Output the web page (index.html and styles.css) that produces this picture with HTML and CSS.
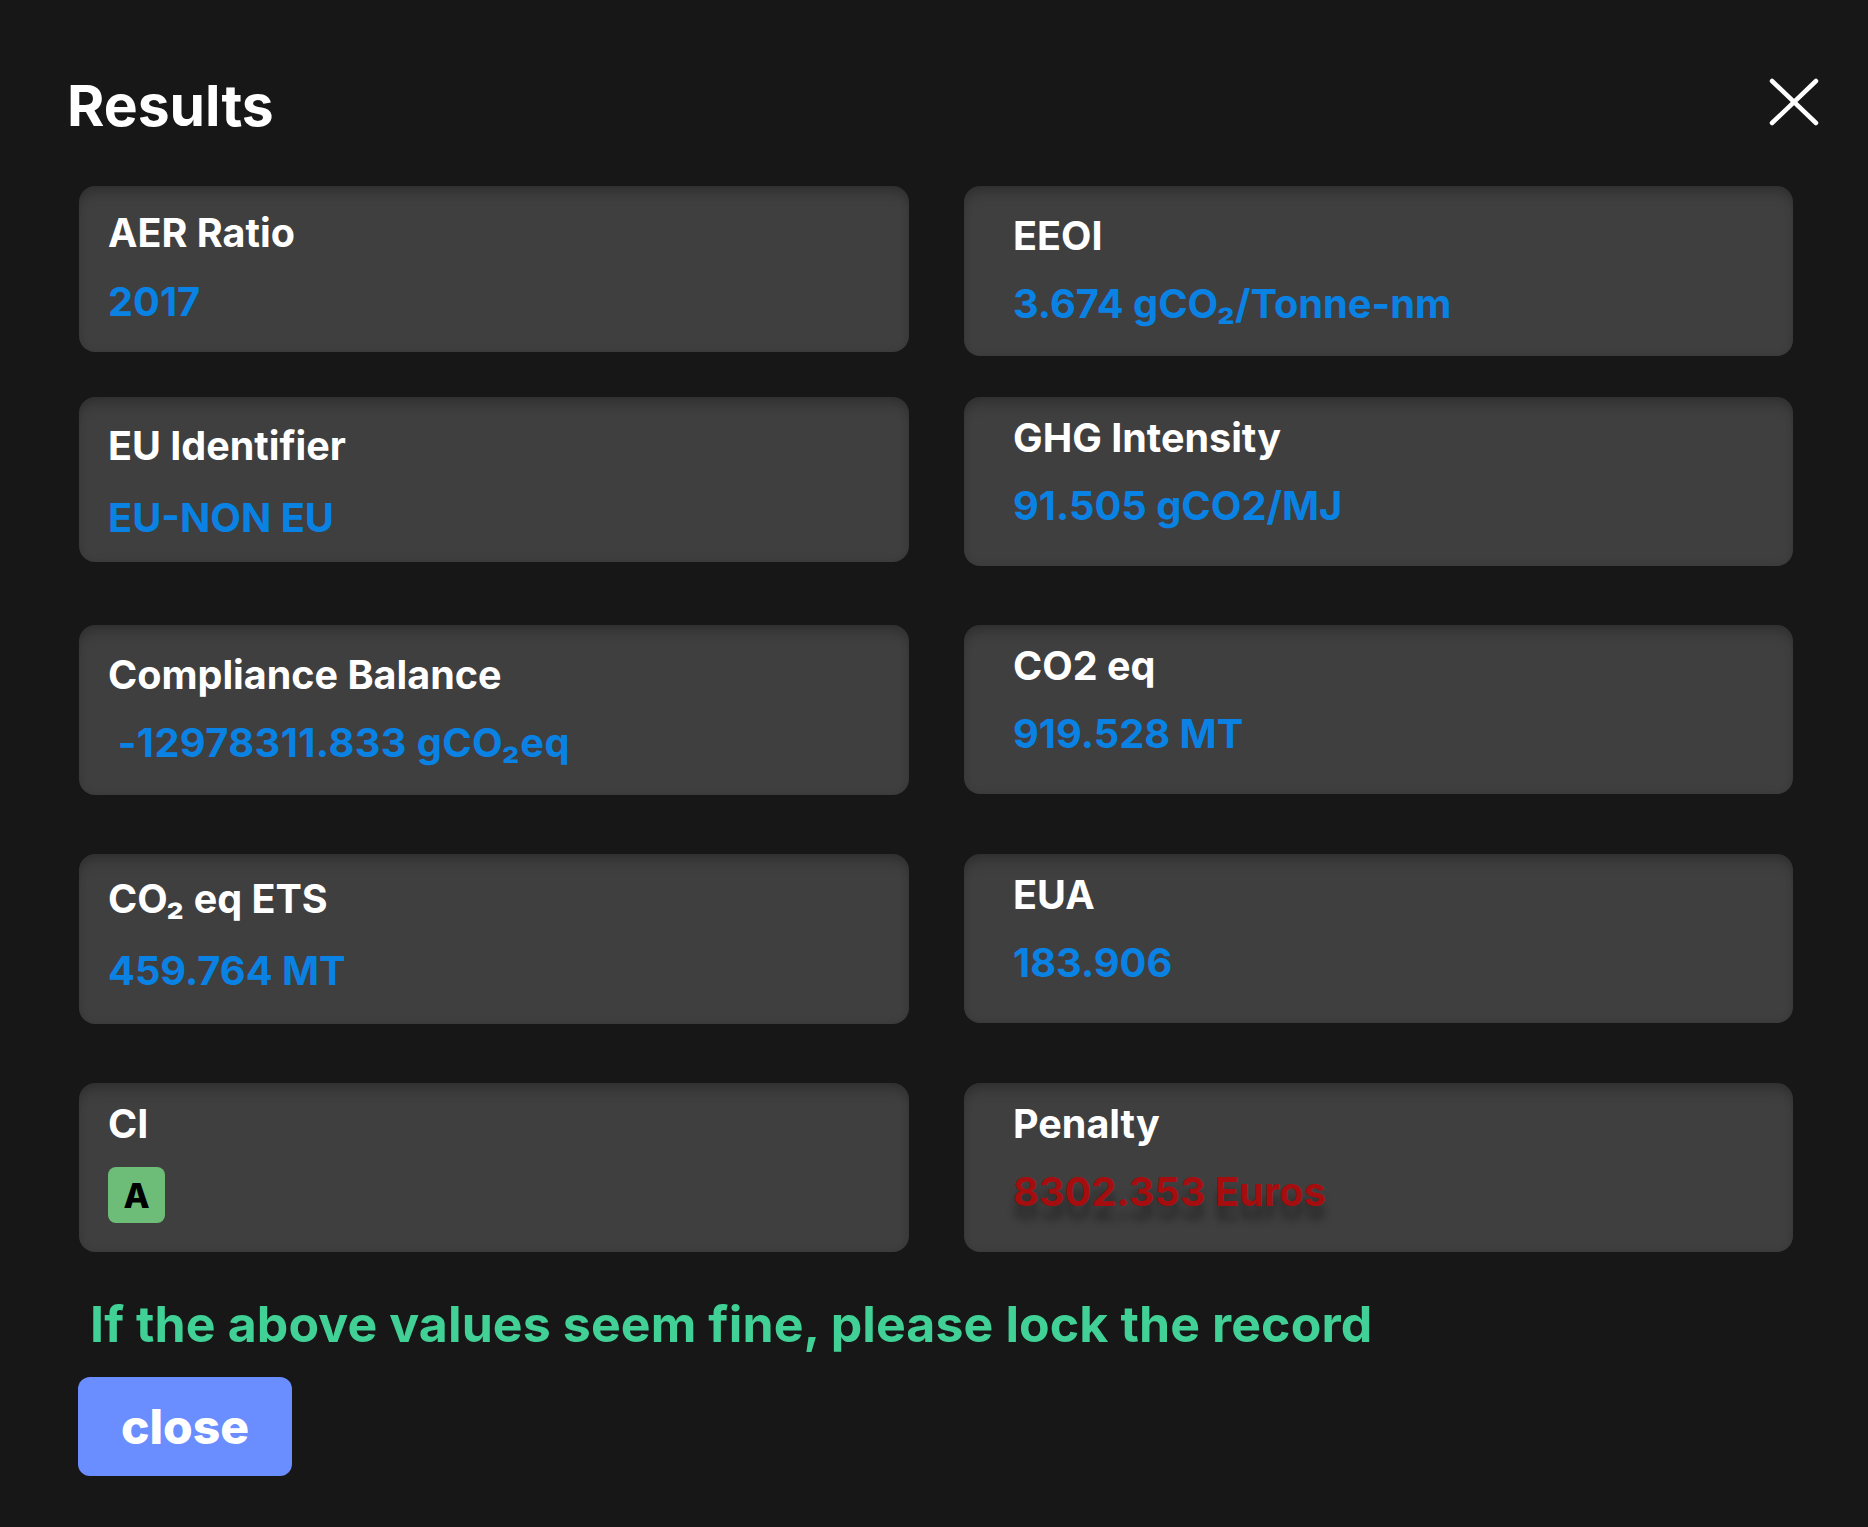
FILE: index.html
```html
<!DOCTYPE html>
<html lang="en">

<head>
    <meta charset="UTF-8">
    <meta name="viewport" content="width=device-width, initial-scale=1.0">
    <title>Results</title>
    <link rel="stylesheet" href="styles.css">
</head>

<body>
    <div class="modal">
        <div class="header">
            <h1 class="title">Results</h1>
            <a href="#" class="close-x">
                <svg width="52" height="50" viewBox="0 0 52 50">
                    <path d="M4 4 L48 46 M48 4 L4 46" stroke="#fff" stroke-width="4.5" stroke-linecap="round" fill="none" />
                </svg>
            </a>
        </div>

        <!-- 上面两行 -->
        <div class="grid grid-top">
            <div class="card left aer">
                <div class="label">AER Ratio</div>
                <div class="value">2017</div>
            </div>
            <div class="card eeoi">
                <div class="label">EEOI</div>
                <div class="value">3.674 gCO₂/Tonne-nm</div>
            </div>
            <div class="card left eu">
                <div class="label">EU Identifier</div>
                <div class="value">EU-NON EU</div>
            </div>
            <div class="card">
                <div class="label">GHG Intensity</div>
                <div class="value">91.505 gCO2/MJ</div>
            </div>
        </div>

        <!-- 下面三行 -->
        <div class="grid grid-main">
            <div class="card left comp">
                <div class="label">Compliance Balance</div>
                <div class="value">&nbsp;-12978311.833 gCO₂eq</div>
            </div>
            <div class="card">
                <div class="label">CO2 eq</div>
                <div class="value">919.528 MT</div>
            </div>
            <div class="card left ets">
                <div class="label">CO₂ eq ETS</div>
                <div class="value">459.764 MT</div>
            </div>
            <div class="card">
                <div class="label">EUA</div>
                <div class="value">183.906</div>
            </div>
            <div class="card left ci">
                <div class="label">CI</div>
                <span class="badge">A</span>
            </div>
            <div class="card">
                <div class="label">Penalty</div>
                <div class="value penalty">8302.353 Euros</div>
            </div>
        </div>

        <p class="note">If the above values seem fine, please lock the record</p>
        <button class="btn-close">close</button>
    </div>
</body>

</html>
```

FILE: styles.css
```css
* {
    margin: 0;
    padding: 0;
    box-sizing: border-box;
}

html,
body {
    background-color: #171717;
}

body {
    font-family: Inter, "Noto Sans", "Liberation Sans", sans-serif;
    color: #fff;
}

.modal {
    padding: 71px 48px 0 67px;
    min-height: 1527px;
}

.header {
    display: flex;
    justify-content: space-between;
    align-items: flex-start;
}

.title {
    font-size: 57px;
    font-weight: 700;
    line-height: 70px;
}

.close-x {
    display: block;
    width: 52px;
    height: 50px;
    margin-top: 6px;
}

.close-x svg {
    display: block;
}

.grid {
    display: grid;
    grid-template-columns: 830px 829px;
    column-gap: 55px;
    align-items: start;
    margin-left: 12px;
}

.grid-top {
    margin-top: 45px;
    row-gap: 41px;
}

.grid-main {
    margin-top: 59px;
    row-gap: 59px;
}

.card {
    background-color: #3f3f3f;
    border-radius: 16px;
    padding: 18px 40px 37px 49px;
    box-shadow: inset 0 14px 14px -8px rgba(0, 0, 0, 0.22), inset 0 0 8px rgba(0, 0, 0, 0.12);
}

.card .label {
    font-size: 39.5px;
    font-weight: 700;
    line-height: 46px;
    margin-bottom: 22px;
}

.card .value {
    font-size: 39.8px;
    font-weight: 700;
    line-height: 46px;
    color: #0a82e4;
}

.card.eeoi {
    padding-top: 27px;
    padding-bottom: 29px;
}

/* 左边一列 */
.card.left {
    padding: 24px 30px 28px 29px;
}

.card.left .label {
    margin-bottom: 23px;
}

.card.aer {
    padding-bottom: 27px;
}

.card.eu {
    padding-top: 26px;
    padding-bottom: 21px;
}

.card.eu .label {
    margin-bottom: 26px;
}

.card.comp {
    padding-top: 27px;
    padding-bottom: 29px;
}

.card.comp .label {
    margin-bottom: 22px;
}

.card.comp .value {
    letter-spacing: 0.4px;
}

.card.ets {
    padding-top: 22px;
    padding-bottom: 30px;
}

.card.ets .label {
    margin-bottom: 26px;
}

.card.ci {
    padding-top: 18px;
    padding-bottom: 29px;
}

.card.ci .label {
    margin-bottom: 20px;
}

.badge {
    display: flex;
    align-items: center;
    justify-content: center;
    width: 57px;
    height: 56px;
    border-radius: 8px;
    background-color: #6dbd78;
    color: #000;
    font-size: 34px;
    font-weight: 800;
}

.card .penalty {
    color: #a50d0f;
    text-shadow: 0 14px 8px rgba(0, 0, 0, 0.35);
}

.note {
    margin-top: 43px;
    margin-left: 23px;
    font-size: 50px;
    font-weight: 700;
    line-height: 58px;
    letter-spacing: 0.1px;
    color: #41d095;
}

.btn-close {
    display: block;
    margin-top: 24px;
    margin-left: 11px;
    width: 214px;
    height: 99px;
    border: none;
    border-radius: 12px;
    background-color: #6a8dff;
    color: #fff;
    font-family: Inter, "Noto Sans", "Liberation Sans", sans-serif;
    font-size: 48px;
    font-weight: 800;
    cursor: pointer;
}
```
